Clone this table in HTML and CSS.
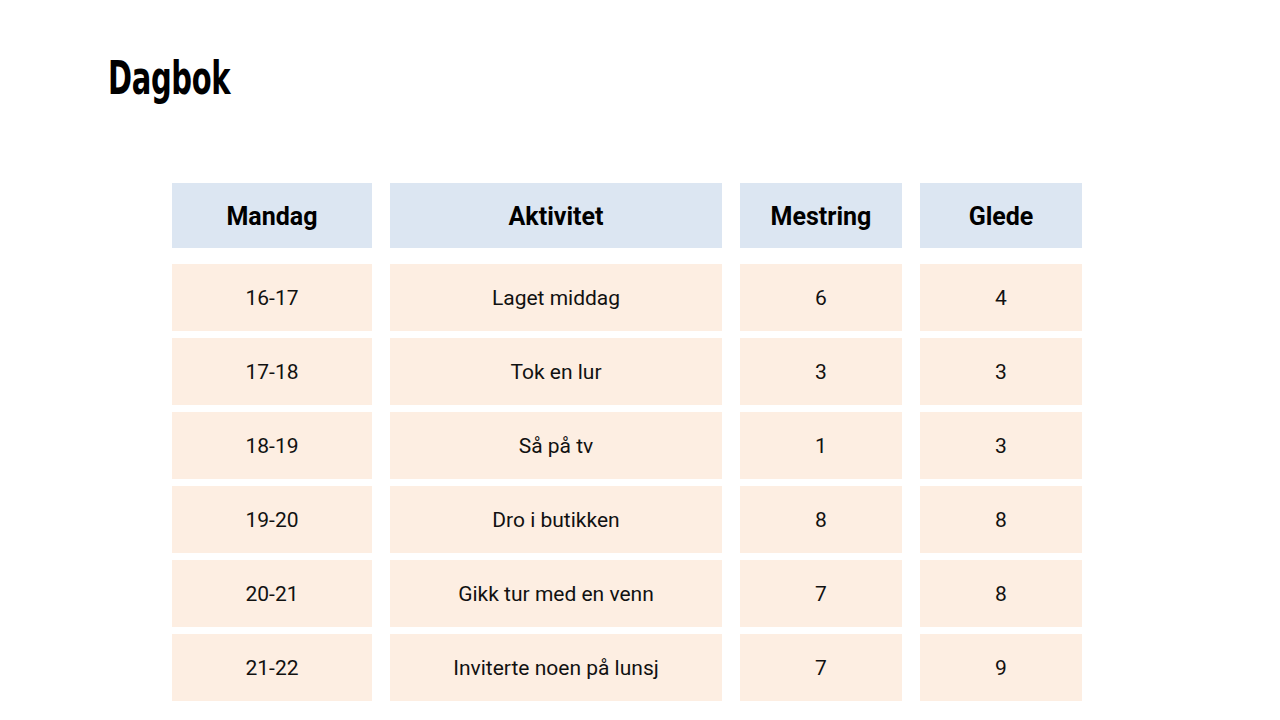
FILE: index.html
```html
<!DOCTYPE html>
<html lang="no">
<head>
<meta charset="utf-8">
<title>Dagbok</title>
<link rel="stylesheet" href="styles.css">
</head>
<body>
<div class="slide">
  <h1 class="title">Dagbok</h1>
  <div class="table">
    <div class="cell head">Mandag</div>
    <div class="cell head">Aktivitet</div>
    <div class="cell head">Mestring</div>
    <div class="cell head">Glede</div>

    <div class="cell">16-17</div><div class="cell">Laget middag</div><div class="cell">6</div><div class="cell">4</div>
    <div class="cell">17-18</div><div class="cell">Tok en lur</div><div class="cell">3</div><div class="cell">3</div>
    <div class="cell">18-19</div><div class="cell">Så på tv</div><div class="cell">1</div><div class="cell">3</div>
    <div class="cell">19-20</div><div class="cell">Dro i butikken</div><div class="cell">8</div><div class="cell">8</div>
    <div class="cell">20-21</div><div class="cell">Gikk tur med en venn</div><div class="cell">7</div><div class="cell">8</div>
    <div class="cell">21-22</div><div class="cell">Inviterte noen på lunsj</div><div class="cell">7</div><div class="cell">9</div>
  </div>
</div>
</body>
</html>
```
FILE: styles.css
```css
html, body {
  margin: 0;
  padding: 0;
  background: #ffffff;
}
.slide {
  width: 1280px;
  height: 720px;
  overflow: hidden;
  padding: 52px 0 0 108px;
  box-sizing: border-box;
}
.title {
  margin: 0;
  font-family: "DejaVu Sans Condensed", "DejaVu Sans", sans-serif;
  font-weight: 700;
  font-size: 46px;
  line-height: 52px;
  color: #000000;
  letter-spacing: -0.5px;
  transform: scaleX(0.7);
  transform-origin: left center;
}
.table {
  margin: 79px 0 0 64px;
  display: grid;
  grid-template-columns: 200px 332px 162px 162px;
  grid-template-rows: 74px repeat(6, 67px);
  column-gap: 18px;
  row-gap: 7px;
}
.cell {
  background: #fdeee2;
  display: flex;
  align-items: center;
  justify-content: center;
  font-family: Roboto, "Liberation Sans", sans-serif;
  font-size: 21px;
  color: #111111;
}
.head {
  background: #dce6f2;
  font-weight: 700;
  font-size: 25px;
  color: #000000;
  height: 65px;
  box-sizing: border-box;
  padding-top: 2px;
  align-self: start;
}
```
